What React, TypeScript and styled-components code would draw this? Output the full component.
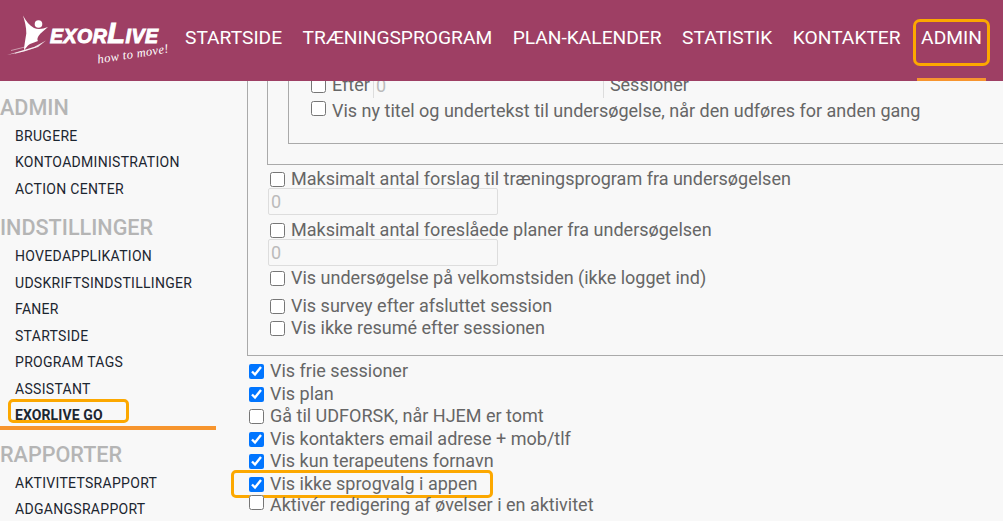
import React from 'react'
import styled, { createGlobalStyle } from 'styled-components'

const GlobalStyle = createGlobalStyle`
  html, body {
    margin: 0;
    height: 100%;
    overflow: hidden;
    background: #f8f8f8;
    font-family: Roboto, "Liberation Sans", sans-serif;
  }
  * { box-sizing: border-box; }
`

const Page = styled.div`
  width: 1003px;
  height: 521px;
  display: flex;
  flex-direction: column;
  overflow: hidden;
`

const TopBar = styled.header`
  position: relative;
  z-index: 2;
  flex: none;
  height: 81px;
  display: flex;
  background: #9e3f64;
`

const Logo = styled.div`
  position: relative;
  flex: none;
  width: 185px;
  height: 81px;
  color: #fff;
`

const LogoMark = styled.svg`
  position: absolute;
  left: 0;
  top: 0;
`

const LogoName = styled.div`
  position: absolute;
  left: 50px;
  top: 20px;
  font: italic 700 19.5px/26px "Liberation Sans", sans-serif;
  letter-spacing: 0.5px;
  -webkit-text-stroke: 1px #fff;
  white-space: nowrap;

  span {
    font-size: 29px;
  }
`

const LogoTag = styled.div`
  position: absolute;
  left: 97px;
  top: 47px;
  font: italic 400 12.5px/14px "Liberation Serif", serif;
  letter-spacing: 0.4px;
  white-space: nowrap;
  transform: rotate(-9deg);
`

const Nav = styled.nav`
  display: flex;
  gap: 20.5px;
`

const NavItem = styled.a<{ $active?: boolean }>`
  position: relative;
  height: 81px;
  padding-top: 26px;
  font-size: 19.2px;
  line-height: 24px;
  color: #fff;
  white-space: nowrap;

  ${({ $active }) =>
    $active &&
    `
    &::after {
      content: '';
      position: absolute;
      left: -4px;
      right: -4px;
      bottom: 0;
      height: 3px;
      background: #f7952e;
    }
  `}
`

const NavHighlight = styled.span`
  position: absolute;
  left: -8px;
  right: -8px;
  top: 19px;
  height: 47px;
  border: 3px solid #fca800;
  border-radius: 7px;
`

const Body = styled.div`
  flex: 1;
  min-height: 0;
  display: flex;
`

const Sidebar = styled.aside`
  flex: none;
  width: 216px;
  padding-top: 14px;
`

const SideHeading = styled.h3`
  margin: 13px 0 2px;
  height: 26px;
  font-size: 21.6px;
  line-height: 26px;
  font-weight: 500;
  color: #b5b5b5;

  &:first-child {
    margin: 0 0 1.5px;
  }
`

const SideItem = styled.a<{ $active?: boolean }>`
  position: relative;
  display: block;
  height: 26.5px;
  padding-left: 15px;
  font-size: 14px;
  line-height: 26.5px;
  letter-spacing: ${({ $active }) => ($active ? 0.1 : 0.3)}px;
  font-weight: ${({ $active }) => ($active ? 700 : 400)};
  color: #1c2630;
  white-space: nowrap;

  ${({ $active }) =>
    $active &&
    `
    &::after {
      content: '';
      position: absolute;
      left: 0;
      right: 0;
      bottom: -1px;
      height: 4px;
      background: #f7952e;
    }
  `}
`

const SideHighlight = styled.span`
  position: absolute;
  left: 8px;
  top: -3px;
  width: 121px;
  height: 24px;
  border: 3px solid #fca800;
  border-radius: 5px;
`

const Main = styled.main`
  flex: 1;
  min-width: 0;
  padding-left: 31px;
  overflow: hidden;
  font-size: 18px;
  color: #666;
`

const OuterGroup = styled.div`
  margin-top: -9px;
  height: 284px;
  margin-right: -20px;
  border-left: 1px solid #aaa;
  border-bottom: 1px solid #aaa;
  padding-left: 19px;
`

const MiddleGroup = styled.div`
  height: 93px;
  border-left: 1px solid #aaa;
  border-bottom: 1px solid #aaa;
  padding-left: 20px;
`

const InnerGroup = styled.div`
  height: 72px;
  border-left: 1px solid #aaa;
  border-bottom: 1px solid #aaa;
  padding-left: 22px;
`

const Row = styled.label<{ $top?: number; $height?: number; $indent?: number }>`
  position: relative;
  display: flex;
  align-items: center;
  gap: 6px;
  height: ${({ $height = 22 }) => $height}px;
  margin-top: ${({ $top = 0 }) => $top}px;
  padding-left: ${({ $indent = 0 }) => $indent}px;
  line-height: 22px;
  white-space: nowrap;
`

const Check = styled.input.attrs({ type: 'checkbox' })<{ $lift?: number }>`
  flex: none;
  width: 15px;
  height: 15px;
  margin: 0 0 ${({ $lift = 0 }) => $lift * 2}px;
`

const ValueBox = styled.input`
  display: block;
  width: 230px;
  height: 27px;
  margin-top: -2px;
  margin-left: 1px;
  padding: 0 2px;
  border: 1px solid #ddd;
  border-radius: 2px;
  background: #f8f8f8;
  font: 18px Roboto, sans-serif;
  color: #bbb;
`

const SessionValue = styled.input`
  width: 231px;
  height: 26px;
  margin-left: -3px;
  padding: 0 2px;
  border: 0;
  border-left: 1px solid #ddd;
  border-right: 1px solid #ddd;
  background: transparent;
  font: 18px Roboto, sans-serif;
  color: #bbb;
`

const RowHighlight = styled.span`
  position: absolute;
  left: -16px;
  top: -3px;
  width: 262px;
  height: 28px;
  border: 3px solid #fca800;
  border-radius: 5px;
  pointer-events: none;
`

const adminItems = ['Brugere', 'Kontoadministration', 'Action center']
const settingItems = ['Hovedapplikation', 'Udskriftsindstillinger', 'Faner', 'Startside', 'Program tags', 'Assistant']
const navItems = ['STARTSIDE', 'TRÆNINGSPROGRAM', 'PLAN-KALENDER', 'STATISTIK', 'KONTAKTER']

const App = () => (
  <Page>
    <GlobalStyle />
    <TopBar>
      <Logo>
        <LogoMark width="60" height="62" viewBox="0 0 60 62" fill="#fff">
          <circle cx="38.5" cy="24" r="3.8" />
          <path d="M23 15.5C26 21 29.5 25.5 34 28C38 29.8 43 29 48 27C44 30.5 40.5 33 38.5 36C37 38.5 37.3 40 38 41L30 44C27.5 45.5 25.5 48 24 50.5C24 46 25.5 39 26.3 33.5C26.5 27 24.5 20.5 23 15.5Z" />
          <path d="M7 55L34 47L46 40.5L38 47L24 51.5Z" opacity="0.85" />
          <path d="M11 50.5L27 46.5M15 53.5L36 47" stroke="#fff" strokeWidth="0.6" opacity="0.8" />
        </LogoMark>
        <LogoName>
          EXOR<span>L</span>IVE
        </LogoName>
        <LogoTag>how to move!</LogoTag>
      </Logo>
      <Nav>
        {navItems.map(item => (
          <NavItem key={item}>{item}</NavItem>
        ))}
        <NavItem $active>
          ADMIN
          <NavHighlight />
        </NavItem>
      </Nav>
    </TopBar>
    <Body>
      <Sidebar>
        <SideHeading>ADMIN</SideHeading>
        {adminItems.map(item => (
          <SideItem key={item}>{item.toUpperCase()}</SideItem>
        ))}
        <SideHeading>INDSTILLINGER</SideHeading>
        {settingItems.map(item => (
          <SideItem key={item}>{item.toUpperCase()}</SideItem>
        ))}
        <SideItem $active>
          EXORLIVE GO
          <SideHighlight />
        </SideItem>
        <SideHeading>RAPPORTER</SideHeading>
        <SideItem>AKTIVITETSRAPPORT</SideItem>
        <SideItem>ADGANGSRAPPORT</SideItem>
      </Sidebar>
      <Main>
        <OuterGroup>
          <MiddleGroup>
            <InnerGroup>
              <Row $height={26}>
                <Check />
                Efter
                <SessionValue readOnly value="0" />
                Sessioner
              </Row>
              <Row $top={2}>
                <Check $lift={2.5} />
                Vis ny titel og undertekst til undersøgelse, når den udføres for anden gang
              </Row>
            </InnerGroup>
          </MiddleGroup>
          <Row $top={3} $indent={3}>
            <Check />
            Maksimalt antal forslag til træningsprogram fra undersøgelsen
          </Row>
          <ValueBox readOnly value="0" />
          <Row $top={4} $indent={3}>
            <Check />
            Maksimalt antal foreslåede planer fra undersøgelsen
          </Row>
          <ValueBox readOnly value="0" />
          <Row $top={1} $indent={3}>
            <Check />
            Vis undersøgelse på velkomstsiden (ikke logget ind)
          </Row>
          <Row $top={6} $indent={3}>
            <Check />
            Vis survey efter afsluttet session
          </Row>
          <Row $indent={3}>
            <Check />
            Vis ikke resumé efter sessionen
          </Row>
        </OuterGroup>
        <Row $top={4} $indent={2}>
          <Check defaultChecked />
          Vis frie sessioner
        </Row>
        <Row $top={1} $indent={2}>
          <Check defaultChecked />
          Vis plan
        </Row>
        <Row $indent={2}>
          <Check />
          Gå til UDFORSK, når HJEM er tomt
        </Row>
        <Row $top={1} $indent={2}>
          <Check defaultChecked />
          Vis kontakters email adrese + mob/tlf
        </Row>
        <Row $indent={2}>
          <Check defaultChecked />
          Vis kun terapeutens fornavn
        </Row>
        <Row $top={1} $indent={2}>
          <Check defaultChecked />
          Vis ikke sprogvalg i appen
          <RowHighlight />
        </Row>
        <Row $top={-1} $indent={2}>
          <Check $lift={2.5} />
          Aktivér redigering af øvelser i en aktivitet
        </Row>
      </Main>
    </Body>
  </Page>
)

export default App
